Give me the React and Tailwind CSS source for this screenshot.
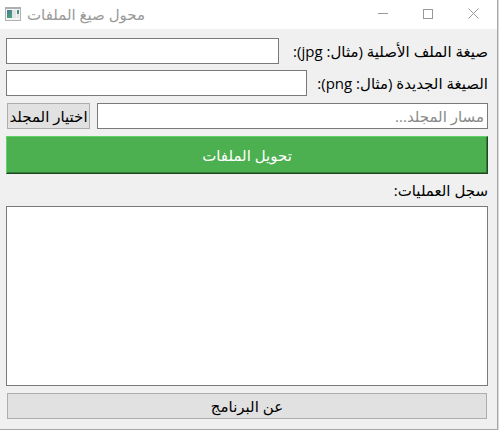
import { useState } from 'react';

const fieldClass = 'min-w-0 flex-1 h-[26px] px-[3px] bg-white border border-[#7a7a7a] text-[15px] text-black placeholder:text-[#8a8a8a] outline-none';
const buttonClass = 'h-[26px] bg-[#e1e1e1] border border-[#adadad] text-[15px] leading-5 text-black whitespace-nowrap';

const WindowIcon = () => (
  <svg width="16" height="14" viewBox="0 0 16 14" shapeRendering="crispEdges" aria-hidden="true">
    <defs>
      <linearGradient id="screen" x1="0" y1="0" x2="0.6" y2="1">
        <stop offset="0" stopColor="#4b7699" />
        <stop offset="1" stopColor="#4aa173" />
      </linearGradient>
    </defs>
    <rect x="0.5" y="0.5" width="15" height="13" fill="#f4f4f4" stroke="#b0b0b0" />
    <rect x="0" y="0" width="16" height="2" fill="#a9afb3" />
    <rect x="2" y="3" width="5" height="8" fill="url(#screen)" />
    <rect x="7" y="3" width="4" height="8" fill="#e0e4e6" />
    <rect x="12" y="3" width="2" height="4" fill="url(#screen)" />
    <rect x="12" y="7" width="2" height="4" fill="#e0e4e6" />
  </svg>
);

const TitleBar = () => (
  <header dir="ltr" className="flex items-center h-[29px] pb-[2px] bg-white text-[#999999]">
    <div className="flex flex-1 items-center gap-[6px] pl-[5px]">
      <WindowIcon />
      <h1 dir="rtl" className="text-[15px] leading-5">محول صيغ الملفات</h1>
    </div>
    <button type="button" aria-label="تصغير" className="flex w-[45px] h-full items-center justify-center">
      <svg width="10" height="10" viewBox="0 0 10 10" stroke="currentColor"><path d="M0 4.5h10" /></svg>
    </button>
    <button type="button" aria-label="تكبير" className="flex w-[45px] h-full items-center justify-center">
      <svg width="10" height="10" viewBox="0 0 10 10" fill="none" stroke="currentColor"><rect x="0.5" y="0.5" width="9" height="9" /></svg>
    </button>
    <button type="button" aria-label="إغلاق" className="flex w-[47px] h-full items-center justify-center">
      <svg width="11" height="11" viewBox="0 0 11 11" stroke="currentColor"><path d="M0.5 0.5l10 10M10.5 0.5l-10 10" /></svg>
    </button>
  </header>
);

const App = () => {
  const [source, setSource] = useState('');
  const [target, setTarget] = useState('');
  const [folder, setFolder] = useState('');

  return (
    <div className="min-h-screen flex bg-[#d9d9d9] pr-px font-['Open_Sans','Noto_Sans','DejaVu_Sans',sans-serif]">
      <div dir="rtl" className="flex flex-1 flex-col min-w-0 bg-[#f0f0f0] border-r border-b border-[#a8a8a8]">
        <TitleBar />
        <main className="flex flex-1 flex-col pt-[9px] pb-[10px] pl-[6px] pr-[9px] text-[15px] leading-5 text-black">
          <div className="flex items-center gap-[6px]">
            <label htmlFor="source" className="w-[203px] whitespace-nowrap">صيغة الملف الأصلية (مثال: jpg):</label>
            <input id="source" type="text" value={source} onChange={(e) => setSource(e.target.value)} className={fieldClass} />
          </div>
          <div className="flex items-center gap-[6px] mt-[6px]">
            <label htmlFor="target" className="w-[175px] whitespace-nowrap">الصيغة الجديدة (مثال: png):</label>
            <input id="target" type="text" value={target} onChange={(e) => setTarget(e.target.value)} className={fieldClass} />
          </div>
          <div className="flex items-center gap-[7px] mt-[7px]">
            <input type="text" aria-label="مسار المجلد" placeholder="مسار المجلد..." value={folder} onChange={(e) => setFolder(e.target.value)} className={fieldClass} />
            <button type="button" className={`${buttonClass} w-[83px] ml-px`}>اختيار المجلد</button>
          </div>
          <button type="button" className="h-[38px] mt-[7px] bg-[#4caf50] border border-t-[#5fd364] border-l-[#5fd364] border-b-[#1f4720] border-r-[#1f4720] shadow-[inset_-1px_-1px_#357a38] text-[15px] leading-5 font-medium text-white">
            تحويل الملفات
          </button>
          <label htmlFor="log" className="mt-[6px] mb-[6px]">سجل العمليات:</label>
          <textarea id="log" readOnly className="flex-1 min-h-[100px] bg-white border border-[#7a7a7a] resize-none outline-none p-1" />
          <button type="button" className={`${buttonClass} mt-[7px] mx-px`}>عن البرنامج</button>
        </main>
      </div>
    </div>
  );
};

export default App;
